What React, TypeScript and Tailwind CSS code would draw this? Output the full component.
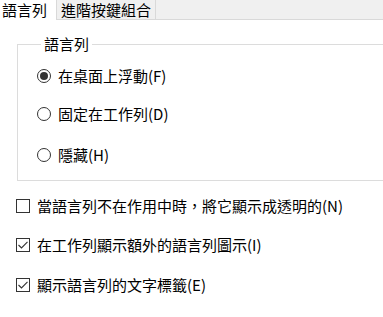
import React from 'react';

const font = { fontFamily: '"Noto Sans CJK TC", "Noto Sans", sans-serif' };

const Radio: React.FC<{ checked?: boolean; label: string; className?: string }> = ({ checked, label, className }) => (
  <div className={`flex items-center h-[20px] gap-[7px] ${className ?? ''}`}>
    <span className="w-[14px] h-[14px] rounded-full border border-[#333333] bg-white flex items-center justify-center shrink-0">
      {checked && <span className="w-[8px] h-[8px] rounded-full bg-[#333333]" />}
    </span>
    <span className="leading-[20px] whitespace-nowrap">{label}</span>
  </div>
);

const Check: React.FC<{ checked?: boolean; label: string; className?: string }> = ({ checked, label, className }) => (
  <div className={`flex items-center h-[20px] gap-[7px] ${className ?? ''}`}>
    <span className="w-[14px] h-[14px] border border-[#333333] bg-white flex items-center justify-center shrink-0">
      {checked && (
        <svg width="12" height="12" viewBox="0 0 12 12">
          <path d="M1.5 6 L4.5 9 L10.5 2.8" fill="none" stroke="#333333" strokeWidth="1.1" />
        </svg>
      )}
    </span>
    <span className="leading-[20px] whitespace-nowrap">{label}</span>
  </div>
);

export default function App() {
  return (
    <div className="w-[383px] h-[317px] bg-white text-black text-[15px] overflow-hidden" style={font}>
      {/* Tabs */}
      <div className="flex h-[20px]">
        <div className="w-[56px] bg-white pl-[2px] leading-[19px]">語言列</div>
        <div className="w-[100px] bg-[#f0f0f0] border-l border-r border-b border-[#d9d9d9] pl-[4px] leading-[19px] whitespace-nowrap">
          進階按鍵組合
        </div>
        <div className="flex-1 bg-[#f0f0f0] border-b border-[#d9d9d9]" />
      </div>

      {/* Group box */}
      <fieldset className="ml-[17px] mt-[14px] w-[400px] h-[147px] border border-[#dcdcdc] pl-[19px]">
        <legend className="ml-[4px] px-[3px] leading-[20px]">語言列</legend>
        <Radio checked label="在桌面上浮動(F)" className="mt-[12px]" />
        <Radio label="固定在工作列(D)" className="mt-[18px]" />
        <Radio label="隱藏(H)" className="mt-[21px]" />
      </fieldset>

      <div className="pl-[16px]">
        <Check label="當語言列不在作用中時，將它顯示成透明的(N)" className="mt-[15px]" />
        <Check checked label="在工作列顯示額外的語言列圖示(I)" className="mt-[19px]" />
        <Check checked label="顯示語言列的文字標籤(E)" className="mt-[20px]" />
      </div>
    </div>
  );
}
